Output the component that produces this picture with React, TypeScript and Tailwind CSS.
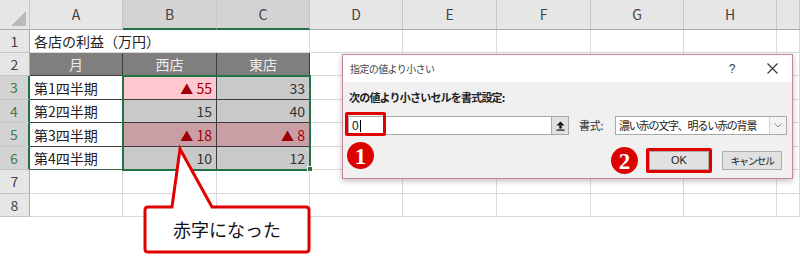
import React from "react";

const COLS = ["A", "B", "C", "D", "E", "F", "G", "H", ""];
const COLW = [
  "w-[93px]",
  "w-[94px]",
  "w-[93px]",
  "w-[93px]",
  "w-[94px]",
  "w-[94px]",
  "w-[93px]",
  "w-[93px]",
  "w-[23px]",
];
const ROWH = [
  "h-[23px]",
  "h-[23px]",
  "h-[24px]",
  "h-[23px]",
  "h-[24px]",
  "h-[23px]",
  "h-[24px]",
  "h-[23px]",
];

const GRID = "border-r border-b border-r-[#dadada] border-b-[#dadada]";
const DARK = "border-r border-b border-r-[#3c3c3c] border-b-[#3c3c3c]";

type CellDef = { text?: React.ReactNode; cls: string };

function red(n: string) {
  return (
    <span className="text-[#9c0006]">
      <span className="text-[13px]">▲</span> {n}
    </span>
  );
}

function cellFor(r: number, c: number): CellDef {
  if (r === 1) {
    if (c === 0)
      return {
        text: "各店の利益（万円）",
        cls: "border-b border-b-[#dadada] justify-start pl-[4px] text-[#222] overflow-visible whitespace-nowrap z-10",
      };
    if (c === 1) return { cls: "border-b border-b-[#dadada]" };
    return { cls: GRID };
  }
  if (r === 2) {
    const t = ["月", "西店", "東店"];
    if (c <= 2)
      return {
        text: t[c],
        cls: `${DARK} bg-[#7f7f7f] text-[#ececec] justify-center`,
      };
    return { cls: GRID };
  }
  if (r >= 3 && r <= 6) {
    const bottom =
      r === 6
        ? "border-r border-b border-r-[#3c3c3c] border-b-[#4a6653]"
        : DARK;
    if (c === 0)
      return {
        text: `第${r - 2}四半期`,
        cls: `${bottom} bg-white justify-start pl-[4px] text-[#222]`,
      };
    if (c === 1 || c === 2) {
      const data: Record<string, { t: React.ReactNode; bg: string }> = {
        "3-1": { t: red("55"), bg: "bg-[#ffc7ce]" },
        "3-2": { t: "33", bg: "bg-[#c9c9c9]" },
        "4-1": { t: "15", bg: "bg-[#c9c9c9]" },
        "4-2": { t: "40", bg: "bg-[#c9c9c9]" },
        "5-1": { t: red("18"), bg: "bg-[#c99fa5]" },
        "5-2": { t: red("8"), bg: "bg-[#c99fa5]" },
        "6-1": { t: "10", bg: "bg-[#c9c9c9]" },
        "6-2": { t: "12", bg: "bg-[#c9c9c9]" },
      };
      const d = data[`${r}-${c}`];
      return {
        text: d.t,
        cls: `${bottom} ${d.bg} justify-end pr-[4px] text-[#333]`,
      };
    }
    return { cls: GRID };
  }
  return { cls: GRID };
}

function Sheet() {
  return (
    <div className="flex flex-col">
      <div className="flex h-[30px]">
        <div className="relative w-[30px] shrink-0 bg-[#e6e6e6] border-r border-b border-r-[#c6c6c6] border-b-[#ababab]">
          <svg
            className="absolute right-[2px] bottom-[2px]"
            width="17"
            height="17"
            viewBox="0 0 17 17"
          >
            <polygon points="16,1 16,16 1,16" fill="#b9b9b9" />
          </svg>
        </div>
        {COLS.map((c, i) => {
          const sel = i === 1 || i === 2;
          return (
            <div
              key={i}
              className={`${COLW[i]} shrink-0 flex items-center justify-center text-[14px] text-[#444] border-r border-r-[#c6c6c6] ${
                sel
                  ? "bg-[#d3d3d3] border-b-2 border-b-[#217346]"
                  : "bg-[#e6e6e6] border-b border-b-[#ababab]"
              }`}
            >
              {c}
            </div>
          );
        })}
      </div>
      {ROWH.map((h, ri) => {
        const r = ri + 1;
        const sel = r >= 3 && r <= 6;
        return (
          <div key={r} className={`flex ${h}`}>
            <div
              className={`w-[30px] shrink-0 flex items-center justify-center text-[14px] border-b border-b-[#c6c6c6] ${
                sel
                  ? "bg-[#d3d3d3] text-[#3a7a54] border-r-2 border-r-[#217346]"
                  : "bg-[#e6e6e6] text-[#444] border-r border-r-[#ababab]"
              }`}
            >
              {r}
            </div>
            {COLS.map((_, ci) => {
              const d = cellFor(r, ci);
              return (
                <div
                  key={ci}
                  className={`${COLW[ci]} shrink-0 flex items-center text-[14px] leading-none ${d.cls}`}
                >
                  {d.text}
                </div>
              );
            })}
          </div>
        );
      })}
    </div>
  );
}

function Badge({ n }: { n: string }) {
  return (
    <div className="w-[27px] h-[27px] rounded-full bg-[#dc0000] flex items-center justify-center">
      <span className="text-white font-bold text-[23px] leading-none font-['Liberation_Serif',serif] mt-[1px]">
        {n}
      </span>
    </div>
  );
}

function Dialog() {
  return (
    <div className="absolute left-[342px] top-[54px] w-[451px] h-[125px] border border-[#c9849b] bg-[#f0f0f0] shadow-[0_2px_6px_rgba(0,0,0,0.25)] flex flex-col text-[#222]">
      <div className="h-[27px] bg-white flex items-center">
        <span className="pl-[7px] text-[10px] tracking-[-0.6px] text-[#444]">
          指定の値より小さい
        </span>
        <div className="flex-1" />
        <div className="w-[40px] flex items-center justify-center text-[12px] text-[#333] font-['Liberation_Sans',sans-serif]">
          ?
        </div>
        <div className="w-[40px] flex items-center justify-center">
          <svg width="11" height="11" viewBox="0 0 11 11">
            <path d="M0.5 0.5 L10.5 10.5 M10.5 0.5 L0.5 10.5" stroke="#333" strokeWidth="1.1" />
          </svg>
        </div>
      </div>
      <div className="pl-[5px] pr-[5px] flex flex-col">
        <div className="mt-[7px] h-[16px] pl-[1px] flex items-center text-[11px] font-bold tracking-[-0.8px] text-[#222]">
          次の値より小さいセルを書式設定:
        </div>
        <div className="mt-[11px] h-[19px] flex items-center">
          <div className="w-[221px] h-[19px] bg-white border border-[#a9a9a9] flex items-center">
            <span className="pl-[3px] text-[12px] leading-none font-['Liberation_Sans',sans-serif]">
              0
            </span>
            <span className="ml-[1px] w-px h-[12px] bg-black" />
            <div className="ml-auto w-[17px] h-full bg-[#e1e1e1] border-l border-l-[#a9a9a9] flex items-center justify-center">
              <svg width="9" height="10" viewBox="0 0 9 10">
                <polygon points="4.5,0.5 8.5,4.5 0.5,4.5" fill="#111" />
                <rect x="3.3" y="4.5" width="2.4" height="3" fill="#111" />
                <rect x="0.5" y="8.5" width="8" height="1.2" fill="#111" />
              </svg>
            </div>
          </div>
          <span className="w-[46px] pl-[10px] text-[11px] tracking-[-0.3px] text-[#333]">
            書式:
          </span>
          <div className="w-[172px] h-[19px] bg-white border border-[#a9a9a9] flex items-center">
            <span className="flex-1 pl-[3px] text-[11px] tracking-[-1.2px] whitespace-nowrap text-[#222]">
              濃い赤の文字、明るい赤の背景
            </span>
            <div className="w-[17px] h-full border-l border-l-[#d4d4d4] bg-[#f3f3f3] flex items-center justify-center">
              <svg width="8" height="5" viewBox="0 0 8 5">
                <path d="M0.5 0.5 L4 4 L7.5 0.5" stroke="#8a8a8a" strokeWidth="1" fill="none" />
              </svg>
            </div>
          </div>
        </div>
        <div className="mt-[13px] h-[25px] flex items-center justify-end pr-[5px]">
          <Badge n="2" />
          <div className="ml-[8px] border-[3px] border-[#e00000] rounded-[2px]">
            <div className="w-[60px] h-[19px] bg-[#e1e1e1] border border-[#adadad] flex items-center justify-center text-[11px] text-[#222] font-['Liberation_Sans',sans-serif]">
              OK
            </div>
          </div>
          <div className="ml-[10px] w-[60px] h-[19px] bg-[#e1e1e1] border border-[#adadad] flex items-center justify-center text-[10px] tracking-[-1.4px] text-[#222]">
            キャンセル
          </div>
        </div>
      </div>
    </div>
  );
}

export default function App() {
  return (
    <div className="relative w-[800px] h-[259px] overflow-hidden bg-white font-['Noto_Sans_CJK_JP','Noto_Sans',sans-serif]">
      <Sheet />
      <div className="absolute left-[122px] top-[75px] w-[189px] h-[96px] border-2 border-[#217346]" />
      <div className="absolute left-[307px] top-[166px] w-[6px] h-[6px] bg-[#217346] border border-white" />

      <Dialog />

      <div className="absolute left-[345px] top-[112px] w-[41px] h-[24px] border-[3px] border-[#e00000] rounded-[2px]" />
      <div className="absolute left-[347px] top-[142px]">
        <Badge n="1" />
      </div>

      <svg
        className="absolute left-0 top-0 pointer-events-none"
        width="800"
        height="259"
        viewBox="0 0 800 259"
      >
        <path
          d="M148 207 H172 L180 149 L212 207 H306 Q309 207 309 210 V249 Q309 252 306 252 H148 Q145 252 145 249 V210 Q145 207 148 207 Z"
          fill="white"
          stroke="#e10000"
          strokeWidth="3"
          strokeLinejoin="miter"
        />
      </svg>
      <div className="absolute left-[145px] top-[207px] w-[164px] h-[45px] flex items-center justify-center text-[18px] text-[#111]">
        赤字になった
      </div>
    </div>
  );
}
